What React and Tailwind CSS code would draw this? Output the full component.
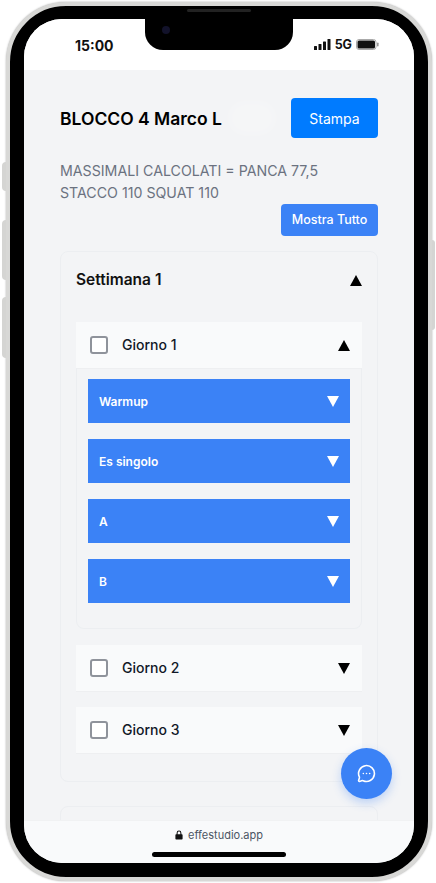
import React from 'react';
import { MessageCircleMore } from 'lucide-react';

function Triangle({ up = false, className = '' }) {
  return (
    <svg viewBox="0 0 12 11" className={`w-3 h-[11px] ${className}`} fill="currentColor">
      <polygon points={up ? '6,0 12,11 0,11' : '0,0 12,0 6,11'} />
    </svg>
  );
}

function StatusIcons() {
  return (
    <div className="flex items-center mb-[2px] text-[#111]">
      <svg viewBox="0 0 17 11" className="w-[17px] h-[11px]" fill="currentColor">
        <rect x="0" y="7" width="3" height="4" rx="0.6" />
        <rect x="4.500" y="5" width="3" height="6" rx="0.6" />
        <rect x="9" y="2.500" width="3" height="8.500" rx="0.6" />
        <rect x="13.500" y="0" width="3" height="11" rx="0.6" />
      </svg>
      <span className="ml-[4px] text-[12.5px] font-bold leading-none">5G</span>
      <svg viewBox="0 0 23 11" className="ml-[4px] w-[23px] h-[11px]" fill="none">
        <rect x="0.5" y="0.5" width="19.5" height="10" rx="2.5" stroke="#aaa" />
        <rect x="1.5" y="1.5" width="17.5" height="8" rx="1.5" fill="#111" />
        <rect x="21" y="3.5" width="1.6" height="4" rx="0.8" fill="#999" />
      </svg>
    </div>
  );
}

function DayHeader({ label, open }) {
  return (
    <div className="h-[46px] flex items-center bg-[#f9fafb] shadow-[0_1px_1px_rgba(0,0,0,0.02)] pl-[14px] pr-[12px]">
      <span className="w-[18px] h-[18px] rounded-[3px] border-2 border-[#8f939b] bg-white" />
      <span className="ml-[14px] -mt-px text-[14px] font-medium text-[#111827]">{label}</span>
      <Triangle up={open} className="ml-auto text-black" />
    </div>
  );
}

function BlueRow({ label }) {
  return (
    <div className="h-[44px] flex items-center justify-between bg-[#3b82f6] pl-[11px] pr-[11px] text-white">
      <span className="mt-px text-[12px] font-semibold">{label}</span>
      <Triangle className="text-white" />
    </div>
  );
}

export default function App() {
  return (
    <div className="w-[436px] h-[883px] bg-white flex items-start pl-[6px] pt-[2px] font-['Inter',sans-serif] overflow-hidden">
      <div className="relative w-[426px] h-[879px] rounded-[60px] bg-black border-[4px] border-[#d8d8d6] shadow-[0_0_2px_rgba(0,0,0,0.35)] pl-[14px] pt-[13px]">
        {/* side buttons */}
        <div className="absolute -left-[8px] top-[156px] w-[4px] h-[29px] rounded-l-sm bg-[#d5d5d3]" />
        <div className="absolute -left-[8px] top-[214px] w-[4px] h-[60px] rounded-l-sm bg-[#d5d5d3]" />
        <div className="absolute -left-[8px] top-[291px] w-[4px] h-[61px] rounded-l-sm bg-[#d5d5d3]" />
        <div className="absolute -right-[7px] top-[234px] w-[3px] h-[90px] rounded-r-sm bg-[#d5d5d3]" />
        {/* speaker */}
        <div className="absolute left-[177px] top-[3px] w-[64px] h-[3px] rounded-full bg-[#222]" />

        <div className="relative w-[390px] h-[844px] rounded-[38px] overflow-hidden bg-[#f3f4f6] flex flex-col">
          {/* status bar */}
          <div className="h-[51px] shrink-0 bg-white flex items-end justify-between pl-[51px] pr-[35px] pb-[17px]">
            <span className="text-[14px] font-bold leading-none text-[#111]">15:00</span>
            <StatusIcons />
          </div>
          <div className="absolute top-0 left-[121px] w-[148px] h-[31px] bg-black rounded-b-[18px]">
            <span className="absolute left-[17px] top-[7px] w-[8px] h-[8px] rounded-full bg-[#12122a]" />
          </div>

          {/* page */}
          <div className="flex-1 min-h-0 overflow-hidden px-[36px] pt-[28px]">
            <div className="relative flex items-center justify-between">
              <h1 className="pt-[3px] text-[17.5px] font-semibold text-black">BLOCCO 4 Marco L</h1>
              <span className="absolute left-[168px] top-[3px] w-[48px] h-[34px] rounded-full bg-white/20 blur-[4px]" />
              <button className="w-[87px] h-[40px] rounded-[4px] bg-[#007bff] text-white text-[14px]">Stampa</button>
            </div>
            <p className="mt-[22px] text-[14.2px] leading-[22px] text-[#6b7280]">
              MASSIMALI CALCOLATI = PANCA 77,5
              <br />
              STACCO 110 SQUAT 110
            </p>
            <div className="flex justify-end">
              <button className="w-[97px] h-[32px] rounded-[4px] bg-[#3b82f6] text-white text-[12.5px] font-medium">Mostra Tutto</button>
            </div>

            <div className="mt-[15px] rounded-[8px] border border-[#eceef1] px-[15px] pb-[28px]">
              <div className="h-[55px] flex items-center justify-between">
                <span className="text-[15.5px] font-semibold text-[#111]">Settimana 1</span>
                <Triangle up className="text-black mt-[2px]" />
              </div>
              <div className="mt-[15px]">
                <DayHeader label="Giorno 1" open />
                <div className="flex flex-col gap-[16px] rounded-b-[8px] border-b border-x border-[#eceef1] px-[11px] pt-[11px] pb-[25px]">
                  <BlueRow label="Warmup" />
                  <BlueRow label="Es singolo" />
                  <BlueRow label="A" />
                  <BlueRow label="B" />
                </div>
              </div>
              <div className="mt-[16px]"><DayHeader label="Giorno 2" /></div>
              <div className="mt-[16px]"><DayHeader label="Giorno 3" /></div>
            </div>
            <div className="mt-[24px] h-[40px] rounded-[8px] border border-[#eceef1]" />
          </div>

          {/* browser bar */}
          <div className="h-[43px] shrink-0 relative z-10 bg-[#f9fafb] border-t border-[#f1f2f3] flex flex-col items-center">
            <div className="flex items-center gap-[5px] mt-[6px] text-[11px] text-[#4b5563]">
              <svg viewBox="0 0 10 12" className="w-[8px] h-[10px]" fill="#111">
                <path d="M2 5V3.4a3 3 0 0 1 6 0V5h.6c.5 0 .9.4.9.9v4.7c0 .5-.4.9-.9.9H1.400c-.5 0-.9-.4-.9-.9V5.900c0-.5.4-.9.9-.9H2zm1.300 0h3.400V3.400a1.700 1.700 0 0 0-3.400 0V5z" />
              </svg>
              <span>effestudio.app</span>
            </div>
            <div className="absolute bottom-[6px] w-[134px] h-[5px] rounded-full bg-black" />
          </div>

          {/* chat button */}
          <button className="absolute z-20 left-[317px] top-[729px] w-[51px] h-[51px] rounded-full bg-[#3b82f6] shadow-[0_4px_10px_rgba(59,130,246,0.3)] flex items-center justify-center text-white">
            <MessageCircleMore size={19} strokeWidth={2} />
          </button>
        </div>
      </div>
    </div>
  );
}
